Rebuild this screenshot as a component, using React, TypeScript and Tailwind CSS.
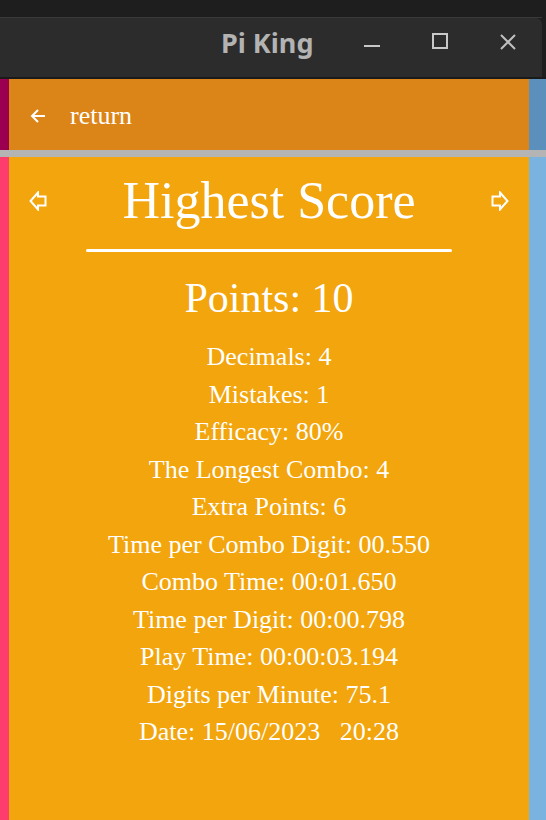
import React from 'react';

const stats: string[] = [
  'Decimals: 4',
  'Mistakes: 1',
  'Efficacy: 80%',
  'The Longest Combo: 4',
  'Extra Points: 6',
  'Time per Combo Digit: 00.550',
  'Combo Time: 00:01.650',
  'Time per Digit: 00:00.798',
  'Play Time: 00:00:03.194',
  'Digits per Minute: 75.1',
  'Date: 15/06/2023\u00a0\u00a0\u00a020:28',
];

const HollowArrow: React.FC<{ flip?: boolean }> = ({ flip }) => (
  <svg
    width="18"
    height="20"
    viewBox="0 0 18 20"
    className={flip ? '-scale-x-100' : ''}
    fill="none"
    stroke="white"
    strokeWidth="2"
    strokeLinejoin="miter"
  >
    <path d="M9 1.5 L1.5 10 L9 18.5 L9 14.5 L16.5 14.5 L16.5 5.5 L9 5.5 Z" />
  </svg>
);

const TitleBar: React.FC = () => (
  <div className="relative h-[59px] bg-[#2c2c2c] rounded-tr-[6px] mr-[4px]">
    <span
      className="absolute left-[221px] top-[11px] text-[27px] leading-none font-bold text-[#b3b3b3]"
      style={{ fontFamily: '"Noto Sans", "DejaVu Sans", sans-serif' }}
    >
      Pi King
    </span>
    <div className="absolute left-[364px] top-[27px] w-[16px] h-[2px] bg-[#c8c8c8]" />
    <div className="absolute left-[432px] top-[15px] w-[16px] h-[16px] border-2 border-[#c8c8c8]" />
    <svg className="absolute left-[499px] top-[15px]" width="18" height="18" viewBox="0 0 18 18" stroke="#c0c0c0" strokeWidth="2">
      <path d="M2 2 L16 16 M16 2 L2 16" />
    </svg>
  </div>
);

export default function App() {
  const serif = { fontFamily: '"Liberation Serif", "DejaVu Serif", serif' };
  return (
    <div className="w-[546px] h-[820px] overflow-hidden bg-[#1e1e1e] flex flex-col">
      <div className="h-[17px] bg-[#1e1e1e]" />
      <div className="h-[1px] bg-[#3a3a3a] mr-[4px]" />
      <TitleBar />
      <div className="h-[2px] bg-[#1a1a1a]" />

      <div className="h-[71px] flex" style={serif}>
        <div className="w-[9px] bg-[#9b0050]" />
        <div className="flex-1 bg-[#db8418] flex items-center pl-[21px] pt-[3px] text-white">
          <svg width="16" height="16" viewBox="0 0 16 16" fill="none" stroke="white" strokeWidth="2">
            <path d="M15 8 H2 M8 2 L2 8 L8 14" />
          </svg>
          <span className="ml-[24px] text-[26px] leading-none">return</span>
        </div>
        <div className="w-[17px] bg-[#5b8fbc]" />
      </div>

      <div className="h-[7px] bg-[#b4b4b4]" />

      <div className="flex-1 flex" style={serif}>
        <div className="w-[9px] bg-[#ff3c6e]" />
        <div className="flex-1 bg-[#f2a50c] text-white flex flex-col items-center">
          <div className="w-full flex items-center justify-between px-[20px] pt-[18px]">
            <HollowArrow />
            <span className="text-[52px] leading-none">Highest Score</span>
            <HollowArrow flip />
          </div>
          <div className="mt-[22px] w-[366px] h-[3px] bg-white rounded-full" />
          <div className="mt-[25px] text-[42px] leading-none">Points: 10</div>
          <div className="mt-[19px] flex flex-col items-center">
            {stats.map((s) => (
              <div key={s} className="text-[26px] leading-[37.5px] whitespace-pre">
                {s}
              </div>
            ))}
          </div>
        </div>
        <div className="w-[17px] bg-[#7ab3e0]" />
      </div>
    </div>
  );
}
